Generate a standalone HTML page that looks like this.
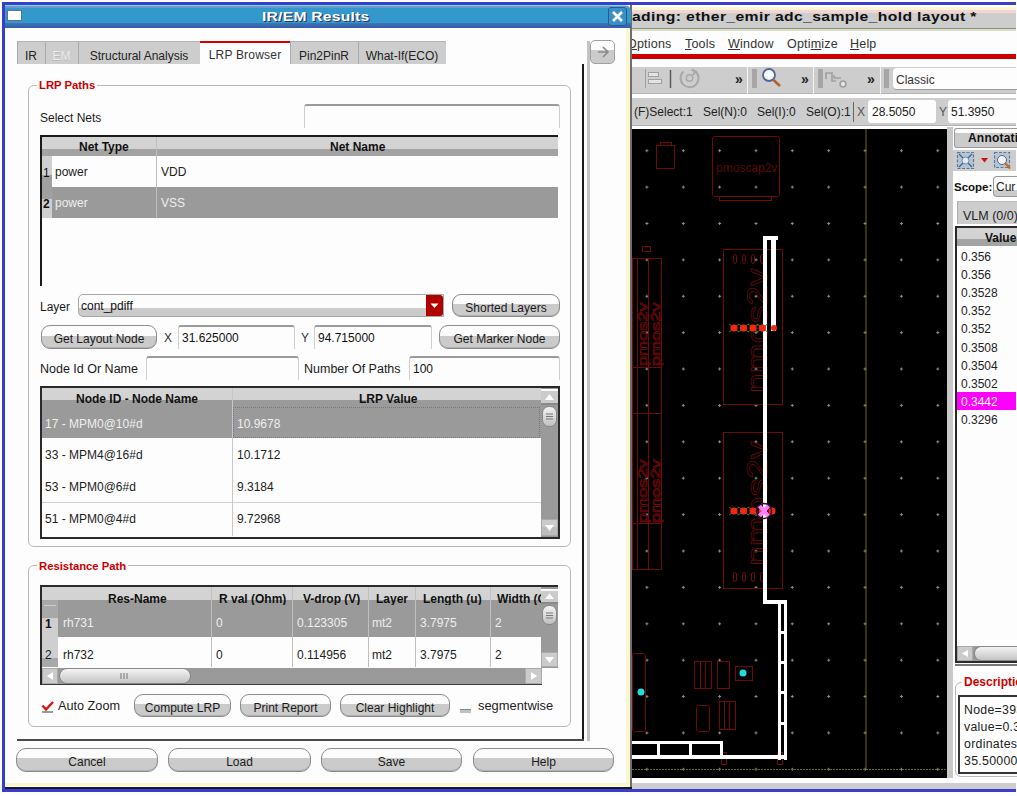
<!DOCTYPE html><html><head><meta charset="utf-8"><title>IR/EM Results</title><style>
*{margin:0;padding:0;box-sizing:border-box}
html,body{width:1017px;height:796px;overflow:hidden;background:#fdfdfd;font-family:"Liberation Sans",sans-serif;font-size:12px;color:#1a1a1a}
.a{position:absolute}
.t{position:absolute;white-space:nowrap;line-height:1}
.b{font-weight:bold}
.btn{position:absolute;padding-top:2px;border:1px solid #8c8c8c;border-radius:9px;background:linear-gradient(#fcfcfc 0,#fcfcfc 45%,#cbcbcb 45%,#cbcbcb 100%);box-shadow:inset 0 -1px 0 #b0b0b0;text-align:center;white-space:nowrap;color:#1a1a1a;font-size:12px}
.inp{position:absolute;background:#fdfdfd;border-top:2px solid #9a9a9a;border-left:1px solid #cfcfcf;border-right:1px solid #cfcfcf;border-radius:3px 3px 0 0}
.grp{position:absolute;border:1px solid #b9b9b9;border-radius:6px}
.gt{position:absolute;background:#fdfdfd;color:#cc0000;font-weight:bold;padding:0 2px;line-height:1;white-space:nowrap}
.hd{position:absolute;background:linear-gradient(#d3d3d3 0,#d3d3d3 62%,#a3a3a3 62%,#a3a3a3 100%)}
.sel{background:#9a9a9a;color:#f4f4f4}
</style></head><body>
<div class="a" style="left:2px;top:2px;width:1014px;height:3px;background:#3a3ccc"></div>
<div class="a" style="left:2px;top:2px;width:3px;height:790px;background:#3a3ccc"></div>
<div class="a" style="left:2px;top:789px;width:1014px;height:3px;background:#3a3ccc"></div>
<div class="a" style="left:632px;top:5px;width:384px;height:2px;background:#fdfdfd"></div>
<div class="a" style="left:632px;top:7px;width:384px;height:3px;background:#fbf6cf"></div>
<div class="a" style="left:632px;top:10px;width:384px;height:3px;background:#f3d6d3"></div>
<div class="a" style="left:632px;top:13px;width:384px;height:15px;background:#cdcdcd"></div>
<div class="a" style="left:632px;top:28px;width:384px;height:1px;background:#8f9a5a"></div>
<div class="a" style="left:632px;top:29px;width:384px;height:2px;background:#d8d8d8"></div>
<div class="t b" style="left:632px;top:9.5px;font-size:13px;letter-spacing:0.3px;transform-origin:0 0;transform:scaleX(1.21);color:#111">ading: ether_emir adc_sample_hold layout *</div>
<div class="a" style="left:632px;top:31px;width:384px;height:23px;background:#fdfdfd"></div>
<div class="t" style="left:627px;top:38px;font-size:12.5px;letter-spacing:0.2px;color:#333"><u>O</u>ptions</div>
<div class="t" style="left:685px;top:38px;font-size:12.5px;letter-spacing:0.2px;color:#333"><u>T</u>ools</div>
<div class="t" style="left:728px;top:38px;font-size:12.5px;letter-spacing:0.2px;color:#333"><u>W</u>indow</div>
<div class="t" style="left:787px;top:38px;font-size:12.5px;letter-spacing:0.2px;color:#333">Opti<u>m</u>ize</div>
<div class="t" style="left:850px;top:38px;font-size:12.5px;letter-spacing:0.2px;color:#333"><u>H</u>elp</div>
<div class="a" style="left:632px;top:54px;width:384px;height:5px;background:#cc0000"></div>
<div class="a" style="left:632px;top:67px;width:384px;height:27px;background:#cdcdcd;border-bottom:1px solid #b4b4b4"></div>
<div class="a" style="left:632px;top:94px;width:384px;height:4px;background:#fdfdfd"></div>
<svg class="a" style="left:632px;top:67px" width="384" height="27"><g stroke="#a0a0a0" fill="#e4e4e4" stroke-width="1"><path d="M13.5 2V21" fill="none"/><rect x="16.5" y="5.5" width="10" height="4"/><rect x="16.5" y="12.5" width="13" height="4"/></g><path d="M38.5 3V21" stroke="#555" stroke-width="1.4"/><g fill="none" stroke="#a8a8a8" stroke-width="2"><path d="M51.5 4.5A9 9 0 1 0 63 4"/><path d="M59.5 2.5L63.5 4.5L61 8"/><circle cx="57.5" cy="11" r="3.2" stroke-width="1.4"/></g><text x="103" y="17" font-family="Liberation Sans" font-size="14" font-weight="bold" fill="#222">»</text><rect x="115" y="0" width="1" height="27" fill="#f4f4f4"/><rect x="120" y="2" width="5" height="19" fill="#a6a6a6"/><circle cx="137" cy="8" r="6" fill="#f4f4f4" stroke="#4a6a9a" stroke-width="1.8"/><path d="M133.5 8H140.5M137 4.5V11.5" stroke="#fff" stroke-width="2.2"/><path d="M141 12.5L148 19" stroke="#b0602a" stroke-width="2.4"/><text x="169" y="17" font-family="Liberation Sans" font-size="14" font-weight="bold" fill="#222">»</text><rect x="181" y="0" width="1" height="27" fill="#f4f4f4"/><rect x="186" y="2" width="5" height="19" fill="#a6a6a6"/><g stroke="#a0a0a0" stroke-width="1.6" fill="none"><path d="M194 12V6H200V14H204M202 8V11H209"/><circle cx="211" cy="17" r="3"/><path d="M209 17H213M211 15V19" stroke="#e8e8e8"/></g><text x="235" y="17" font-family="Liberation Sans" font-size="14" font-weight="bold" fill="#222">»</text><rect x="248" y="0" width="1" height="27" fill="#f4f4f4"/><rect x="252" y="2" width="5" height="19" fill="#a6a6a6"/></svg>
<div class="a" style="left:632px;top:98px;width:384px;height:28px;background:#cdcdcd;border-bottom:1px solid #b0b0b0"></div>
<div class="a" style="left:632px;top:126px;width:384px;height:3px;background:#fdfdfd"></div>
<div class="t" style="left:634px;top:106px;font-size:12px;color:#222">(F)Select:1</div>
<div class="t" style="left:703px;top:106px;font-size:12px;color:#222">Sel(N):0</div>
<div class="t" style="left:757px;top:106px;font-size:12px;color:#222">Sel(I):0</div>
<div class="t" style="left:806px;top:106px;font-size:12px;color:#222">Sel(O):1</div>
<div class="a" style="left:853px;top:102px;width:1px;height:20px;background:#666"></div>
<div class="t" style="left:857px;top:106px;font-size:12px;color:#555">X</div>
<div class="a" style="left:868px;top:100px;width:68px;height:23px;background:#fdfdfd;border-radius:3px"></div>
<div class="t" style="left:872px;top:106px;font-size:12px;color:#222">28.5050</div>
<div class="t" style="left:939px;top:106px;font-size:12px;color:#555">Y</div>
<div class="a" style="left:948px;top:100px;width:70px;height:23px;background:#fdfdfd;border-radius:3px"></div>
<div class="t" style="left:951px;top:106px;font-size:12px;color:#222">51.3950</div>
<div class="a" style="left:893px;top:68px;width:124px;height:22px;background:#fdfdfd;border-radius:4px 0 0 4px;border-bottom:1px solid #999"></div>
<div class="t" style="left:896px;top:74px;font-size:12px;color:#333">Classic</div>
<div class="a" style="left:632px;top:129px;width:315px;height:649px;background:#000"></div>
<div class="a" style="left:632px;top:778px;width:384px;height:5px;background:#fdfdfd"></div>
<div class="a" style="left:632px;top:783px;width:384px;height:6px;background:#cdcdcd"></div>
<svg class="a" style="left:0;top:0" width="1017" height="796"><defs><clipPath id="cc"><rect x="632" y="129" width="315" height="649"/></clipPath></defs><g clip-path="url(#cc)"><path d="M645.4 150.7H648.4M646.9 149.2V152.2" stroke="#8a8a8a" stroke-width="1"/><path d="M645.4 187.1H648.4M646.9 185.6V188.6" stroke="#8a8a8a" stroke-width="1"/><path d="M645.4 223.5H648.4M646.9 222.0V225.0" stroke="#8a8a8a" stroke-width="1"/><path d="M645.4 259.9H648.4M646.9 258.4V261.4" stroke="#8a8a8a" stroke-width="1"/><path d="M645.4 296.3H648.4M646.9 294.8V297.8" stroke="#8a8a8a" stroke-width="1"/><path d="M645.4 332.6H648.4M646.9 331.1V334.1" stroke="#8a8a8a" stroke-width="1"/><path d="M645.4 369.0H648.4M646.9 367.5V370.5" stroke="#8a8a8a" stroke-width="1"/><path d="M645.4 405.4H648.4M646.9 403.9V406.9" stroke="#8a8a8a" stroke-width="1"/><path d="M645.4 441.8H648.4M646.9 440.3V443.3" stroke="#8a8a8a" stroke-width="1"/><path d="M645.4 478.2H648.4M646.9 476.7V479.7" stroke="#8a8a8a" stroke-width="1"/><path d="M645.4 514.6H648.4M646.9 513.1V516.1" stroke="#8a8a8a" stroke-width="1"/><path d="M645.4 551.0H648.4M646.9 549.5V552.5" stroke="#8a8a8a" stroke-width="1"/><path d="M645.4 587.4H648.4M646.9 585.9V588.9" stroke="#8a8a8a" stroke-width="1"/><path d="M645.4 623.8H648.4M646.9 622.3V625.3" stroke="#8a8a8a" stroke-width="1"/><path d="M645.4 660.2H648.4M646.9 658.7V661.7" stroke="#8a8a8a" stroke-width="1"/><path d="M645.4 696.5H648.4M646.9 695.0V698.0" stroke="#8a8a8a" stroke-width="1"/><path d="M645.4 732.9H648.4M646.9 731.4V734.4" stroke="#8a8a8a" stroke-width="1"/><path d="M645.4 769.3H648.4M646.9 767.8V770.8" stroke="#8a8a8a" stroke-width="1"/><path d="M681.8 150.7H684.8M683.3 149.2V152.2" stroke="#8a8a8a" stroke-width="1"/><path d="M681.8 187.1H684.8M683.3 185.6V188.6" stroke="#8a8a8a" stroke-width="1"/><path d="M681.8 223.5H684.8M683.3 222.0V225.0" stroke="#8a8a8a" stroke-width="1"/><path d="M681.8 259.9H684.8M683.3 258.4V261.4" stroke="#8a8a8a" stroke-width="1"/><path d="M681.8 296.3H684.8M683.3 294.8V297.8" stroke="#8a8a8a" stroke-width="1"/><path d="M681.8 332.6H684.8M683.3 331.1V334.1" stroke="#8a8a8a" stroke-width="1"/><path d="M681.8 369.0H684.8M683.3 367.5V370.5" stroke="#8a8a8a" stroke-width="1"/><path d="M681.8 405.4H684.8M683.3 403.9V406.9" stroke="#8a8a8a" stroke-width="1"/><path d="M681.8 441.8H684.8M683.3 440.3V443.3" stroke="#8a8a8a" stroke-width="1"/><path d="M681.8 478.2H684.8M683.3 476.7V479.7" stroke="#8a8a8a" stroke-width="1"/><path d="M681.8 514.6H684.8M683.3 513.1V516.1" stroke="#8a8a8a" stroke-width="1"/><path d="M681.8 551.0H684.8M683.3 549.5V552.5" stroke="#8a8a8a" stroke-width="1"/><path d="M681.8 587.4H684.8M683.3 585.9V588.9" stroke="#8a8a8a" stroke-width="1"/><path d="M681.8 623.8H684.8M683.3 622.3V625.3" stroke="#8a8a8a" stroke-width="1"/><path d="M681.8 660.2H684.8M683.3 658.7V661.7" stroke="#8a8a8a" stroke-width="1"/><path d="M681.8 696.5H684.8M683.3 695.0V698.0" stroke="#8a8a8a" stroke-width="1"/><path d="M681.8 732.9H684.8M683.3 731.4V734.4" stroke="#8a8a8a" stroke-width="1"/><path d="M681.8 769.3H684.8M683.3 767.8V770.8" stroke="#8a8a8a" stroke-width="1"/><path d="M718.1 150.7H721.1M719.6 149.2V152.2" stroke="#8a8a8a" stroke-width="1"/><path d="M718.1 187.1H721.1M719.6 185.6V188.6" stroke="#8a8a8a" stroke-width="1"/><path d="M718.1 223.5H721.1M719.6 222.0V225.0" stroke="#8a8a8a" stroke-width="1"/><path d="M718.1 259.9H721.1M719.6 258.4V261.4" stroke="#8a8a8a" stroke-width="1"/><path d="M718.1 296.3H721.1M719.6 294.8V297.8" stroke="#8a8a8a" stroke-width="1"/><path d="M718.1 332.6H721.1M719.6 331.1V334.1" stroke="#8a8a8a" stroke-width="1"/><path d="M718.1 369.0H721.1M719.6 367.5V370.5" stroke="#8a8a8a" stroke-width="1"/><path d="M718.1 405.4H721.1M719.6 403.9V406.9" stroke="#8a8a8a" stroke-width="1"/><path d="M718.1 441.8H721.1M719.6 440.3V443.3" stroke="#8a8a8a" stroke-width="1"/><path d="M718.1 478.2H721.1M719.6 476.7V479.7" stroke="#8a8a8a" stroke-width="1"/><path d="M718.1 514.6H721.1M719.6 513.1V516.1" stroke="#8a8a8a" stroke-width="1"/><path d="M718.1 551.0H721.1M719.6 549.5V552.5" stroke="#8a8a8a" stroke-width="1"/><path d="M718.1 587.4H721.1M719.6 585.9V588.9" stroke="#8a8a8a" stroke-width="1"/><path d="M718.1 623.8H721.1M719.6 622.3V625.3" stroke="#8a8a8a" stroke-width="1"/><path d="M718.1 660.2H721.1M719.6 658.7V661.7" stroke="#8a8a8a" stroke-width="1"/><path d="M718.1 696.5H721.1M719.6 695.0V698.0" stroke="#8a8a8a" stroke-width="1"/><path d="M718.1 732.9H721.1M719.6 731.4V734.4" stroke="#8a8a8a" stroke-width="1"/><path d="M718.1 769.3H721.1M719.6 767.8V770.8" stroke="#8a8a8a" stroke-width="1"/><path d="M754.5 150.7H757.5M756.0 149.2V152.2" stroke="#8a8a8a" stroke-width="1"/><path d="M754.5 187.1H757.5M756.0 185.6V188.6" stroke="#8a8a8a" stroke-width="1"/><path d="M754.5 223.5H757.5M756.0 222.0V225.0" stroke="#8a8a8a" stroke-width="1"/><path d="M754.5 259.9H757.5M756.0 258.4V261.4" stroke="#8a8a8a" stroke-width="1"/><path d="M754.5 296.3H757.5M756.0 294.8V297.8" stroke="#8a8a8a" stroke-width="1"/><path d="M754.5 332.6H757.5M756.0 331.1V334.1" stroke="#8a8a8a" stroke-width="1"/><path d="M754.5 369.0H757.5M756.0 367.5V370.5" stroke="#8a8a8a" stroke-width="1"/><path d="M754.5 405.4H757.5M756.0 403.9V406.9" stroke="#8a8a8a" stroke-width="1"/><path d="M754.5 441.8H757.5M756.0 440.3V443.3" stroke="#8a8a8a" stroke-width="1"/><path d="M754.5 478.2H757.5M756.0 476.7V479.7" stroke="#8a8a8a" stroke-width="1"/><path d="M754.5 514.6H757.5M756.0 513.1V516.1" stroke="#8a8a8a" stroke-width="1"/><path d="M754.5 551.0H757.5M756.0 549.5V552.5" stroke="#8a8a8a" stroke-width="1"/><path d="M754.5 587.4H757.5M756.0 585.9V588.9" stroke="#8a8a8a" stroke-width="1"/><path d="M754.5 623.8H757.5M756.0 622.3V625.3" stroke="#8a8a8a" stroke-width="1"/><path d="M754.5 660.2H757.5M756.0 658.7V661.7" stroke="#8a8a8a" stroke-width="1"/><path d="M754.5 696.5H757.5M756.0 695.0V698.0" stroke="#8a8a8a" stroke-width="1"/><path d="M754.5 732.9H757.5M756.0 731.4V734.4" stroke="#8a8a8a" stroke-width="1"/><path d="M754.5 769.3H757.5M756.0 767.8V770.8" stroke="#8a8a8a" stroke-width="1"/><path d="M790.8 150.7H793.8M792.3 149.2V152.2" stroke="#8a8a8a" stroke-width="1"/><path d="M790.8 187.1H793.8M792.3 185.6V188.6" stroke="#8a8a8a" stroke-width="1"/><path d="M790.8 223.5H793.8M792.3 222.0V225.0" stroke="#8a8a8a" stroke-width="1"/><path d="M790.8 259.9H793.8M792.3 258.4V261.4" stroke="#8a8a8a" stroke-width="1"/><path d="M790.8 296.3H793.8M792.3 294.8V297.8" stroke="#8a8a8a" stroke-width="1"/><path d="M790.8 332.6H793.8M792.3 331.1V334.1" stroke="#8a8a8a" stroke-width="1"/><path d="M790.8 369.0H793.8M792.3 367.5V370.5" stroke="#8a8a8a" stroke-width="1"/><path d="M790.8 405.4H793.8M792.3 403.9V406.9" stroke="#8a8a8a" stroke-width="1"/><path d="M790.8 441.8H793.8M792.3 440.3V443.3" stroke="#8a8a8a" stroke-width="1"/><path d="M790.8 478.2H793.8M792.3 476.7V479.7" stroke="#8a8a8a" stroke-width="1"/><path d="M790.8 514.6H793.8M792.3 513.1V516.1" stroke="#8a8a8a" stroke-width="1"/><path d="M790.8 551.0H793.8M792.3 549.5V552.5" stroke="#8a8a8a" stroke-width="1"/><path d="M790.8 587.4H793.8M792.3 585.9V588.9" stroke="#8a8a8a" stroke-width="1"/><path d="M790.8 623.8H793.8M792.3 622.3V625.3" stroke="#8a8a8a" stroke-width="1"/><path d="M790.8 660.2H793.8M792.3 658.7V661.7" stroke="#8a8a8a" stroke-width="1"/><path d="M790.8 696.5H793.8M792.3 695.0V698.0" stroke="#8a8a8a" stroke-width="1"/><path d="M790.8 732.9H793.8M792.3 731.4V734.4" stroke="#8a8a8a" stroke-width="1"/><path d="M790.8 769.3H793.8M792.3 767.8V770.8" stroke="#8a8a8a" stroke-width="1"/><path d="M827.2 150.7H830.2M828.7 149.2V152.2" stroke="#8a8a8a" stroke-width="1"/><path d="M827.2 187.1H830.2M828.7 185.6V188.6" stroke="#8a8a8a" stroke-width="1"/><path d="M827.2 223.5H830.2M828.7 222.0V225.0" stroke="#8a8a8a" stroke-width="1"/><path d="M827.2 259.9H830.2M828.7 258.4V261.4" stroke="#8a8a8a" stroke-width="1"/><path d="M827.2 296.3H830.2M828.7 294.8V297.8" stroke="#8a8a8a" stroke-width="1"/><path d="M827.2 332.6H830.2M828.7 331.1V334.1" stroke="#8a8a8a" stroke-width="1"/><path d="M827.2 369.0H830.2M828.7 367.5V370.5" stroke="#8a8a8a" stroke-width="1"/><path d="M827.2 405.4H830.2M828.7 403.9V406.9" stroke="#8a8a8a" stroke-width="1"/><path d="M827.2 441.8H830.2M828.7 440.3V443.3" stroke="#8a8a8a" stroke-width="1"/><path d="M827.2 478.2H830.2M828.7 476.7V479.7" stroke="#8a8a8a" stroke-width="1"/><path d="M827.2 514.6H830.2M828.7 513.1V516.1" stroke="#8a8a8a" stroke-width="1"/><path d="M827.2 551.0H830.2M828.7 549.5V552.5" stroke="#8a8a8a" stroke-width="1"/><path d="M827.2 587.4H830.2M828.7 585.9V588.9" stroke="#8a8a8a" stroke-width="1"/><path d="M827.2 623.8H830.2M828.7 622.3V625.3" stroke="#8a8a8a" stroke-width="1"/><path d="M827.2 660.2H830.2M828.7 658.7V661.7" stroke="#8a8a8a" stroke-width="1"/><path d="M827.2 696.5H830.2M828.7 695.0V698.0" stroke="#8a8a8a" stroke-width="1"/><path d="M827.2 732.9H830.2M828.7 731.4V734.4" stroke="#8a8a8a" stroke-width="1"/><path d="M827.2 769.3H830.2M828.7 767.8V770.8" stroke="#8a8a8a" stroke-width="1"/><path d="M863.6 150.7H866.6M865.1 149.2V152.2" stroke="#8a8a8a" stroke-width="1"/><path d="M863.6 187.1H866.6M865.1 185.6V188.6" stroke="#8a8a8a" stroke-width="1"/><path d="M863.6 223.5H866.6M865.1 222.0V225.0" stroke="#8a8a8a" stroke-width="1"/><path d="M863.6 259.9H866.6M865.1 258.4V261.4" stroke="#8a8a8a" stroke-width="1"/><path d="M863.6 296.3H866.6M865.1 294.8V297.8" stroke="#8a8a8a" stroke-width="1"/><path d="M863.6 332.6H866.6M865.1 331.1V334.1" stroke="#8a8a8a" stroke-width="1"/><path d="M863.6 369.0H866.6M865.1 367.5V370.5" stroke="#8a8a8a" stroke-width="1"/><path d="M863.6 405.4H866.6M865.1 403.9V406.9" stroke="#8a8a8a" stroke-width="1"/><path d="M863.6 441.8H866.6M865.1 440.3V443.3" stroke="#8a8a8a" stroke-width="1"/><path d="M863.6 478.2H866.6M865.1 476.7V479.7" stroke="#8a8a8a" stroke-width="1"/><path d="M863.6 514.6H866.6M865.1 513.1V516.1" stroke="#8a8a8a" stroke-width="1"/><path d="M863.6 551.0H866.6M865.1 549.5V552.5" stroke="#8a8a8a" stroke-width="1"/><path d="M863.6 587.4H866.6M865.1 585.9V588.9" stroke="#8a8a8a" stroke-width="1"/><path d="M863.6 623.8H866.6M865.1 622.3V625.3" stroke="#8a8a8a" stroke-width="1"/><path d="M863.6 660.2H866.6M865.1 658.7V661.7" stroke="#8a8a8a" stroke-width="1"/><path d="M863.6 696.5H866.6M865.1 695.0V698.0" stroke="#8a8a8a" stroke-width="1"/><path d="M863.6 732.9H866.6M865.1 731.4V734.4" stroke="#8a8a8a" stroke-width="1"/><path d="M863.6 769.3H866.6M865.1 767.8V770.8" stroke="#8a8a8a" stroke-width="1"/><path d="M899.9 150.7H902.9M901.4 149.2V152.2" stroke="#8a8a8a" stroke-width="1"/><path d="M899.9 187.1H902.9M901.4 185.6V188.6" stroke="#8a8a8a" stroke-width="1"/><path d="M899.9 223.5H902.9M901.4 222.0V225.0" stroke="#8a8a8a" stroke-width="1"/><path d="M899.9 259.9H902.9M901.4 258.4V261.4" stroke="#8a8a8a" stroke-width="1"/><path d="M899.9 296.3H902.9M901.4 294.8V297.8" stroke="#8a8a8a" stroke-width="1"/><path d="M899.9 332.6H902.9M901.4 331.1V334.1" stroke="#8a8a8a" stroke-width="1"/><path d="M899.9 369.0H902.9M901.4 367.5V370.5" stroke="#8a8a8a" stroke-width="1"/><path d="M899.9 405.4H902.9M901.4 403.9V406.9" stroke="#8a8a8a" stroke-width="1"/><path d="M899.9 441.8H902.9M901.4 440.3V443.3" stroke="#8a8a8a" stroke-width="1"/><path d="M899.9 478.2H902.9M901.4 476.7V479.7" stroke="#8a8a8a" stroke-width="1"/><path d="M899.9 514.6H902.9M901.4 513.1V516.1" stroke="#8a8a8a" stroke-width="1"/><path d="M899.9 551.0H902.9M901.4 549.5V552.5" stroke="#8a8a8a" stroke-width="1"/><path d="M899.9 587.4H902.9M901.4 585.9V588.9" stroke="#8a8a8a" stroke-width="1"/><path d="M899.9 623.8H902.9M901.4 622.3V625.3" stroke="#8a8a8a" stroke-width="1"/><path d="M899.9 660.2H902.9M901.4 658.7V661.7" stroke="#8a8a8a" stroke-width="1"/><path d="M899.9 696.5H902.9M901.4 695.0V698.0" stroke="#8a8a8a" stroke-width="1"/><path d="M899.9 732.9H902.9M901.4 731.4V734.4" stroke="#8a8a8a" stroke-width="1"/><path d="M899.9 769.3H902.9M901.4 767.8V770.8" stroke="#8a8a8a" stroke-width="1"/><path d="M936.3 150.7H939.3M937.8 149.2V152.2" stroke="#8a8a8a" stroke-width="1"/><path d="M936.3 187.1H939.3M937.8 185.6V188.6" stroke="#8a8a8a" stroke-width="1"/><path d="M936.3 223.5H939.3M937.8 222.0V225.0" stroke="#8a8a8a" stroke-width="1"/><path d="M936.3 259.9H939.3M937.8 258.4V261.4" stroke="#8a8a8a" stroke-width="1"/><path d="M936.3 296.3H939.3M937.8 294.8V297.8" stroke="#8a8a8a" stroke-width="1"/><path d="M936.3 332.6H939.3M937.8 331.1V334.1" stroke="#8a8a8a" stroke-width="1"/><path d="M936.3 369.0H939.3M937.8 367.5V370.5" stroke="#8a8a8a" stroke-width="1"/><path d="M936.3 405.4H939.3M937.8 403.9V406.9" stroke="#8a8a8a" stroke-width="1"/><path d="M936.3 441.8H939.3M937.8 440.3V443.3" stroke="#8a8a8a" stroke-width="1"/><path d="M936.3 478.2H939.3M937.8 476.7V479.7" stroke="#8a8a8a" stroke-width="1"/><path d="M936.3 514.6H939.3M937.8 513.1V516.1" stroke="#8a8a8a" stroke-width="1"/><path d="M936.3 551.0H939.3M937.8 549.5V552.5" stroke="#8a8a8a" stroke-width="1"/><path d="M936.3 587.4H939.3M937.8 585.9V588.9" stroke="#8a8a8a" stroke-width="1"/><path d="M936.3 623.8H939.3M937.8 622.3V625.3" stroke="#8a8a8a" stroke-width="1"/><path d="M936.3 660.2H939.3M937.8 658.7V661.7" stroke="#8a8a8a" stroke-width="1"/><path d="M936.3 696.5H939.3M937.8 695.0V698.0" stroke="#8a8a8a" stroke-width="1"/><path d="M936.3 732.9H939.3M937.8 731.4V734.4" stroke="#8a8a8a" stroke-width="1"/><path d="M936.3 769.3H939.3M937.8 767.8V770.8" stroke="#8a8a8a" stroke-width="1"/><path d="M866 129V769" stroke="#6a6a10" stroke-width="1"/><path d="M632 769.5H947" stroke="#6a6a10" stroke-width="1" stroke-dasharray="2 1"/><g fill="none" stroke="#6e0a0a" stroke-width="1"><rect x="656.5" y="145.5" width="18" height="23"/><rect x="660.5" y="142.5" width="11" height="3"/><rect x="712.5" y="136.5" width="67" height="60" rx="2"/><rect x="719.5" y="196.5" width="52" height="4"/><rect x="632.5" y="258.5" width="29" height="311"/><path d="M648.5 259V570M637.5 259V570M632 367.5H662M632 413.5H662M632 523.5H662"/><rect x="642.5" y="246.5" width="8" height="5"/><rect x="723.5" y="249.5" width="59" height="155"/><rect x="723.5" y="432.5" width="59" height="156"/><rect x="694.5" y="661.5" width="17" height="27"/><path d="M700.5 662V688M705.5 662V688"/><rect x="717.5" y="661.5" width="12" height="27"/><rect x="735.5" y="666.5" width="17" height="14"/><rect x="696.5" y="705.5" width="13" height="26" rx="2"/><rect x="719.5" y="701.5" width="16" height="28"/><path d="M724.5 702V729M729.5 702V729"/><rect x="632.5" y="653.5" width="13" height="78" rx="2"/><rect x="721.5" y="752.5" width="5" height="12"/><rect x="777.5" y="752.5" width="5" height="12"/></g><text x="716" y="172" font-family="Liberation Sans" font-size="12" fill="#5a0808">pmoscap2v</text><text transform="translate(767,393) rotate(-90) scale(1.05,0.85)" font-family="Liberation Sans" font-size="34" fill="none" stroke="#6e0a0a" stroke-width="0.8">nmos2v</text><text transform="translate(767,566) rotate(-90) scale(1.05,0.85)" font-family="Liberation Sans" font-size="34" fill="none" stroke="#6e0a0a" stroke-width="0.8">nmos2v</text><text transform="translate(647,366) rotate(-90) scale(1.3,0.85)" font-family="Liberation Sans" font-size="14" fill="none" stroke="#6e0a0a" stroke-width="0.8">pmos2v</text><text transform="translate(660,366) rotate(-90) scale(1.3,0.85)" font-family="Liberation Sans" font-size="14" fill="none" stroke="#6e0a0a" stroke-width="0.8">pmos2v</text><text transform="translate(647,523) rotate(-90) scale(1.3,0.85)" font-family="Liberation Sans" font-size="14" fill="none" stroke="#6e0a0a" stroke-width="0.8">pmos2v</text><text transform="translate(660,523) rotate(-90) scale(1.3,0.85)" font-family="Liberation Sans" font-size="14" fill="none" stroke="#6e0a0a" stroke-width="0.8">pmos2v</text><rect x="733.5" y="254.5" width="3" height="9" rx="1.5" fill="none" stroke="#6e0a0a"/><rect x="733.5" y="572.5" width="3" height="9" rx="1.5" fill="none" stroke="#6e0a0a"/><rect x="742.5" y="254.5" width="3" height="9" rx="1.5" fill="none" stroke="#6e0a0a"/><rect x="742.5" y="572.5" width="3" height="9" rx="1.5" fill="none" stroke="#6e0a0a"/><rect x="751.5" y="254.5" width="3" height="9" rx="1.5" fill="none" stroke="#6e0a0a"/><rect x="751.5" y="572.5" width="3" height="9" rx="1.5" fill="none" stroke="#6e0a0a"/><rect x="760.5" y="254.5" width="3" height="9" rx="1.5" fill="none" stroke="#6e0a0a"/><rect x="760.5" y="572.5" width="3" height="9" rx="1.5" fill="none" stroke="#6e0a0a"/><g fill="#ffffff"><rect x="763" y="236" width="15" height="4"/><rect x="771" y="236" width="5" height="95"/><rect x="763" y="236" width="4" height="367"/><rect x="763" y="600" width="24" height="4"/><rect x="778" y="600" width="3" height="160"/><rect x="784" y="600" width="3" height="160"/><rect x="778" y="631" width="9" height="3"/><rect x="778" y="661" width="9" height="3"/><rect x="778" y="691" width="9" height="3"/><rect x="778" y="722" width="9" height="3"/><rect x="632" y="755" width="155" height="4"/><rect x="632" y="741" width="91" height="3"/><rect x="657" y="741" width="3" height="18"/><rect x="689" y="741" width="3" height="18"/><rect x="720" y="741" width="3" height="18"/></g><path d="M729 324L739 332M729 332L739 324" stroke="#6a6a10" stroke-width="1"/><circle cx="734" cy="328" r="3.6" fill="#ee2a10"/><path d="M738.5 324L748.5 332M738.5 332L748.5 324" stroke="#6a6a10" stroke-width="1"/><circle cx="743.5" cy="328" r="3.6" fill="#ee2a10"/><path d="M748 324L758 332M748 332L758 324" stroke="#6a6a10" stroke-width="1"/><circle cx="753" cy="328" r="3.6" fill="#ee2a10"/><path d="M757.5 324L767.5 332M757.5 332L767.5 324" stroke="#6a6a10" stroke-width="1"/><circle cx="762.5" cy="328" r="3.6" fill="#ee2a10"/><path d="M729 507L739 515M729 515L739 507" stroke="#6a6a10" stroke-width="1"/><circle cx="734" cy="511" r="3.6" fill="#ee2a10"/><path d="M738.5 507L748.5 515M738.5 515L748.5 507" stroke="#6a6a10" stroke-width="1"/><circle cx="743.5" cy="511" r="3.6" fill="#ee2a10"/><path d="M748 507L758 515M748 515L758 507" stroke="#6a6a10" stroke-width="1"/><circle cx="753" cy="511" r="3.6" fill="#ee2a10"/><path d="M757.5 507L767.5 515M757.5 515L767.5 507" stroke="#6a6a10" stroke-width="1"/><circle cx="762.5" cy="511" r="3.6" fill="#ee2a10"/><circle cx="774" cy="328" r="3" fill="#ee2a10"/><circle cx="772" cy="511" r="3.6" fill="#ee2a10"/><circle cx="764" cy="511" r="7.5" fill="none" stroke="#3a103a" stroke-width="1.5"/><path d="M759.5 506L768.5 516M759.5 516L768.5 506" stroke="#ff80ff" stroke-width="4"/><circle cx="743" cy="673" r="3.5" fill="#22dddd"/><circle cx="641" cy="692" r="3.5" fill="#22dddd"/></g></svg>
<div class="a" style="left:947px;top:127px;width:6px;height:651px;background:#c8c8c8"></div>
<div class="a" style="left:953px;top:127px;width:63px;height:651px;background:#fdfdfd"></div>
<div class="a" style="left:954px;top:128px;width:63px;height:20px;background:linear-gradient(#fcfcfc 0,#fcfcfc 25%,#cbcbcb 25%);border:1px solid #9a9a9a;border-right:none;border-radius:3px 0 0 3px"></div>
<div class="t b" style="left:968px;top:132px;font-size:12px;color:#111;letter-spacing:0.2px">Annotation</div>
<div class="a" style="left:953px;top:150px;width:63px;height:21px;background:#cdcdcd"></div>
<svg class="a" style="left:953px;top:150px" width="64" height="21"><rect x="4.5" y="2.5" width="16" height="16" fill="#b8c4d0" stroke="#5a7aa0" stroke-width="1.2" stroke-dasharray="3 1.5"/><path d="M6 4L10 8M19 4L15 8M6 17L10 13M19 17L15 13" stroke="#3a6a9a" stroke-width="1.4"/><circle cx="12.5" cy="10.5" r="3.5" fill="#e0ecf4" stroke="#6a8aaa"/><path d="M28 8H35L31.5 12.5Z" fill="#d01010"/><rect x="41.5" y="2.5" width="15" height="15" fill="#b8c4d0" stroke="#5a7aa0" stroke-width="1.2" stroke-dasharray="3 1.5"/><circle cx="49" cy="10" r="4.5" fill="#eef4fa" stroke="#4a6a8a"/><path d="M52 13L57 18.5" stroke="#c66a20" stroke-width="2"/></svg>
<div class="t b" style="left:954px;top:182px;font-size:11.5px;color:#111">Scope:</div>
<div class="a" style="left:993px;top:176px;width:24px;height:21px;background:linear-gradient(#fcfcfc 0,#fcfcfc 70%,#cbcbcb 70%);border:1px solid #999;border-right:none;border-radius:4px 0 0 4px"></div>
<div class="t" style="left:996px;top:181px;font-size:12px;color:#222">Cur</div>
<div class="a" style="left:957px;top:201px;width:60px;height:23px;background:#cdcdcd;border-left:1px solid #aaa;border-top:1px solid #bbb"></div>
<div class="t" style="left:963px;top:210px;font-size:12.5px;color:#222">VLM (0/0)</div>
<div class="a" style="left:955px;top:226px;width:62px;height:437px;border:2px solid #2a2a2a;border-right:none;background:#fdfdfd"></div>
<div class="hd" style="left:957px;top:228px;width:60px;height:18px"></div>
<div class="t b" style="left:985px;top:232px;font-size:12px;color:#111">Value</div>
<div class="t" style="left:961px;top:251px;font-size:12px;color:#222">0.356</div>
<div class="t" style="left:961px;top:269px;font-size:12px;color:#222">0.356</div>
<div class="t" style="left:961px;top:287px;font-size:12px;color:#222">0.3528</div>
<div class="t" style="left:961px;top:305px;font-size:12px;color:#222">0.352</div>
<div class="t" style="left:961px;top:323px;font-size:12px;color:#222">0.352</div>
<div class="t" style="left:961px;top:342px;font-size:12px;color:#222">0.3508</div>
<div class="t" style="left:961px;top:360px;font-size:12px;color:#222">0.3504</div>
<div class="t" style="left:961px;top:378px;font-size:12px;color:#222">0.3502</div>
<div class="a" style="left:957px;top:392px;width:59px;height:18px;background:#ff00ff"></div>
<div class="t" style="left:961px;top:396px;font-size:12px;color:#fff">0.3442</div>
<div class="t" style="left:961px;top:414px;font-size:12px;color:#222">0.3296</div>
<div class="a" style="left:957px;top:646px;width:60px;height:15px;background:#9a9a9a"></div>
<div class="a" style="left:957px;top:646px;width:16px;height:15px;background:#cbcbcb;border:1px solid #aaa"></div>
<svg class="a" style="left:957px;top:646px" width="16" height="15"><path d="M11 4V11L5 7.5Z" fill="#fff"/></svg>
<div class="a" style="left:974px;top:646px;width:43px;height:15px;border:1px solid #888;border-right:none;border-radius:7px 0 0 7px;background:linear-gradient(#f4f4f4,#c4c4c4)"></div>
<div class="a" style="left:955px;top:664px;width:62px;height:2px;background:#777"></div>
<div class="grp" style="left:955px;top:682px;width:70px;height:95px"></div>
<div class="gt" style="left:962px;top:676px;font-size:12px">Description</div>
<div class="a" style="left:958px;top:695px;width:59px;height:79px;border:2px solid #333;border-right:none;background:#fdfdfd"></div>
<div class="t" style="left:964px;top:704px;font-size:12.3px;letter-spacing:0.3px;color:#222">Node=393</div>
<div class="t" style="left:964px;top:721px;font-size:12.3px;letter-spacing:0.3px;color:#222">value=0.3442</div>
<div class="t" style="left:964px;top:738px;font-size:12.3px;letter-spacing:0.3px;color:#222">ordinates</div>
<div class="t" style="left:964px;top:755px;font-size:12.3px;letter-spacing:0.3px;color:#222">35.500000</div>
<div class="a" style="left:5px;top:5px;width:626px;height:782px;background:#fdfdfd"></div>
<div class="a" style="left:626px;top:28px;width:4px;height:759px;background:#fbf6cf"></div>
<div class="a" style="left:5px;top:783px;width:625px;height:3px;background:#fbf6cf"></div>
<div class="a" style="left:5px;top:787px;width:627px;height:2px;background:#1a1a1a"></div>
<div class="a" style="left:630px;top:5px;width:2px;height:782px;background:#6e6e6e"></div>
<div class="a" style="left:5px;top:5px;width:626px;height:23px;border-radius:0 6px 0 0;background:linear-gradient(#6ee0f0 0,#6ee0f0 1px,#6a98c0 1px,#6a98c0 3px,#3399cc 3px,#3399cc 18px,#3a78b8 18px,#3a5aa8 23px)"></div>
<div class="a" style="left:7px;top:10px;width:15px;height:11px;background:#fdfdfd;border:1px solid #6a6a8a"></div>
<div class="t b" style="left:262px;top:11px;font-size:12.5px;letter-spacing:0.2px;transform-origin:0 0;transform:scaleX(1.25);color:#fff;text-shadow:1px 1px 0 #2a3a5a">IR/EM Results</div>
<div class="a" style="left:608px;top:7px;width:19px;height:19px;border:1px solid #2a5a8a;border-radius:3px;background:#3a8fc8"></div>
<svg class="a" style="left:608px;top:7px" width="19" height="19"><path d="M5 5L14 14M14 5L5 14" stroke="#fff" stroke-width="2.6"/></svg>
<div class="a" style="left:17px;top:41px;width:28px;height:23px;background:#cdcdcd;border-left:1px solid #a9a9a9;border-top:1px solid #b4b4b4"></div>
<div class="t" style="left:17px;top:50px;width:28px;text-align:center;font-size:12px;color:#222">IR</div>
<div class="a" style="left:45px;top:41px;width:33px;height:23px;background:#cdcdcd;border-left:1px solid #a9a9a9;border-top:1px solid #b4b4b4"></div>
<div class="t" style="left:45px;top:50px;width:33px;text-align:center;font-size:12px;color:#ececec;text-shadow:0 1px 0 #b8b8b8">EM</div>
<div class="a" style="left:78px;top:41px;width:122px;height:23px;background:#cdcdcd;border-left:1px solid #a9a9a9;border-top:1px solid #b4b4b4"></div>
<div class="t" style="left:78px;top:50px;width:122px;text-align:center;font-size:12px;color:#222">Structural Analysis</div>
<div class="a" style="left:290px;top:41px;width:68px;height:23px;background:#cdcdcd;border-left:1px solid #a9a9a9;border-top:1px solid #b4b4b4"></div>
<div class="t" style="left:290px;top:50px;width:68px;text-align:center;font-size:12px;color:#222">Pin2PinR</div>
<div class="a" style="left:358px;top:41px;width:88px;height:23px;background:#cdcdcd;border-left:1px solid #a9a9a9;border-top:1px solid #b4b4b4"></div>
<div class="t" style="left:358px;top:50px;width:88px;text-align:center;font-size:12px;color:#222">What-If(ECO)</div>
<div class="a" style="left:200px;top:41px;width:90px;height:23px;background:#fdfdfd;border-top:2px solid #d40000"></div>
<div class="t" style="left:200px;top:49px;width:90px;text-align:center;font-size:12px;color:#333;letter-spacing:0.2px">LRP Browser</div>
<div class="a" style="left:587px;top:41px;width:3px;height:700px;background:#c4c4c4"></div>
<div class="a" style="left:582px;top:64px;width:2px;height:677px;background:#1a1a1a"></div>
<div class="a" style="left:17px;top:739px;width:567px;height:2px;background:#4a4a4a"></div>
<div class="a" style="left:590px;top:40px;width:25px;height:24px;border:1px solid #a0a0a0;border-radius:5px;background:linear-gradient(#fcfcfc 0,#fcfcfc 40%,#cbcbcb 40%)"></div>
<svg class="a" style="left:590px;top:40px" width="25" height="24"><path d="M8 12H17M13 7L18 12L13 17" stroke="#8a8a8a" stroke-width="1.6" fill="none"/></svg>
<div class="grp" style="left:28px;top:85px;width:543px;height:462px"></div>
<div class="gt" style="left:37px;top:80px;font-size:11.3px">LRP Paths</div>
<div class="t" style="left:40px;top:112px;font-size:12px">Select Nets</div>
<div class="inp" style="left:304px;top:104px;width:256px;height:24px"></div>
<div class="a" style="left:40px;top:135px;width:518px;height:2px;background:#1a1a1a"></div>
<div class="a" style="left:40px;top:135px;width:2px;height:151px;background:#1a1a1a"></div>
<div class="hd" style="left:42px;top:137px;width:516px;height:19px"></div>
<div class="a" style="left:156px;top:137px;width:1px;height:81px;background:#bdbdbd"></div>
<div class="t b" style="left:79px;top:141px;font-size:12px;color:#111">Net Type</div>
<div class="t b" style="left:330px;top:141px;font-size:12px;color:#111">Net Name</div>
<div class="a" style="left:42px;top:156px;width:516px;height:31px;background:#fdfdfd"></div>
<div class="a" style="left:42px;top:187px;width:516px;height:31px;background:#9a9a9a"></div>
<div class="a" style="left:42px;top:156px;width:10px;height:31px;background:linear-gradient(#cfcfcf 0,#cfcfcf 60%,#a0a0a0 60%)"></div>
<div class="a" style="left:42px;top:187px;width:10px;height:31px;background:linear-gradient(#a0a0a0 0,#a0a0a0 40%,#cfcfcf 40%)"></div>
<div class="a" style="left:156px;top:156px;width:1px;height:62px;background:#bdbdbd"></div>
<div class="t" style="left:43px;top:167px;font-size:12px;color:#111">1</div>
<div class="t" style="left:55px;top:166px;font-size:12px;color:#222">power</div>
<div class="t" style="left:161px;top:166px;font-size:12px;color:#222">VDD</div>
<div class="t b" style="left:43px;top:198px;font-size:12px;color:#111">2</div>
<div class="t" style="left:55px;top:197px;font-size:12px;color:#eee">power</div>
<div class="t" style="left:161px;top:197px;font-size:12px;color:#eee">VSS</div>
<div class="t" style="left:40px;top:301px;font-size:12px">Layer</div>
<div class="a" style="left:78px;top:294px;width:366px;height:23px;border:1px solid #a8a8a8;border-radius:5px 0 0 5px;background:linear-gradient(#fcfcfc 0,#fcfcfc 62%,#cbcbcb 62%)"></div>
<div class="t" style="left:81px;top:300px;font-size:12px;color:#111">cont_pdiff</div>
<div class="a" style="left:426px;top:295px;width:17px;height:21px;background:#b00000;border-radius:0 3px 3px 0"></div>
<svg class="a" style="left:426px;top:295px" width="17" height="21"><path d="M4.5 8.5H12.5L8.5 13Z" fill="#fff"/></svg>
<div class="btn" style="left:452px;top:294px;width:108px;height:23px;line-height:22px">Shorted Layers</div>
<div class="btn" style="left:41px;top:325px;width:116px;height:24px;line-height:23px">Get Layout Node</div>
<div class="t" style="left:164px;top:332px;font-size:12px;color:#333">X</div>
<div class="inp" style="left:178px;top:325px;width:117px;height:24px"></div>
<div class="t" style="left:182px;top:332px;font-size:12px;color:#111">31.625000</div>
<div class="t" style="left:301px;top:332px;font-size:12px;color:#333">Y</div>
<div class="inp" style="left:314px;top:325px;width:118px;height:24px"></div>
<div class="t" style="left:318px;top:332px;font-size:12px;color:#111">94.715000</div>
<div class="btn" style="left:439px;top:325px;width:121px;height:24px;line-height:23px">Get Marker Node</div>
<div class="t" style="left:40px;top:363px;font-size:12.5px">Node Id Or Name</div>
<div class="inp" style="left:146px;top:356px;width:153px;height:24px"></div>
<div class="t" style="left:304px;top:363px;font-size:12.5px">Number Of Paths</div>
<div class="inp" style="left:409px;top:356px;width:151px;height:24px"></div>
<div class="t" style="left:413px;top:363px;font-size:12px;color:#111">100</div>
<div class="a" style="left:40px;top:386px;width:520px;height:153px;border:2px solid #2a2a2a;border-right-width:2px;background:#fdfdfd"></div>
<div class="a" style="left:42px;top:388px;width:499px;height:12px;background:#d3d3d3"></div>
<div class="a" style="left:42px;top:400px;width:499px;height:38px;background:#9a9a9a"></div>
<div class="a" style="left:42px;top:502px;width:499px;height:1px;background:#d0d0d0"></div>
<div class="a" style="left:232px;top:388px;width:1px;height:148px;background:#c8c8c8"></div>
<div class="a" style="left:233px;top:407px;width:307px;height:31px;border:1px dotted #777"></div>
<div class="t b" style="left:76px;top:393px;font-size:12px;color:#111">Node ID - Node Name</div>
<div class="t b" style="left:359px;top:393px;font-size:12px;color:#111">LRP Value</div>
<div class="t" style="left:45px;top:418px;font-size:12px;color:#eee">17 - MPM0@10#d</div>
<div class="t" style="left:237px;top:418px;font-size:12px;color:#eee">10.9678</div>
<div class="t" style="left:45px;top:449px;font-size:12px;color:#222">33 - MPM4@16#d</div>
<div class="t" style="left:237px;top:449px;font-size:12px;color:#222">10.1712</div>
<div class="t" style="left:45px;top:481px;font-size:12px;color:#222">53 - MPM0@6#d</div>
<div class="t" style="left:237px;top:481px;font-size:12px;color:#222">9.3184</div>
<div class="t" style="left:45px;top:513px;font-size:12px;color:#222">51 - MPM0@4#d</div>
<div class="t" style="left:237px;top:513px;font-size:12px;color:#222">9.72968</div>
<div class="a" style="left:541px;top:388px;width:17px;height:149px;background:#9a9a9a"></div>
<div class="a" style="left:541px;top:389px;width:17px;height:16px;background:#cbcbcb;border-top:2px solid #fcfcfc;border-bottom:2px solid #8a8a8a"></div>
<svg class="a" style="left:541px;top:389px" width="17" height="16"><path d="M4 11H13L8.5 5Z" fill="#fff"/></svg>
<div class="a" style="left:542px;top:406px;width:15px;height:21px;border:1px solid #888;border-radius:7px;background:linear-gradient(#f4f4f4,#c0c0c0)"></div>
<svg class="a" style="left:542px;top:406px" width="15" height="21"><path d="M4 8H11M4 10.5H11M4 13H11" stroke="#777" stroke-width="1"/></svg>
<div class="a" style="left:541px;top:519px;width:17px;height:17px;background:linear-gradient(#cbcbcb 0,#cbcbcb 50%,#bdbdbd 50%);border:1px solid #aaa"></div>
<svg class="a" style="left:541px;top:519px" width="17" height="17"><path d="M4 6H13L8.5 12Z" fill="#fff"/></svg>
<div class="grp" style="left:28px;top:565px;width:543px;height:162px"></div>
<div class="gt" style="left:37px;top:561px;font-size:11.3px">Resistance Path</div>
<div class="a" style="left:40px;top:585px;width:518px;height:100px;border:2px solid #2a2a2a;border-right:none;border-bottom:none;background:#fdfdfd"></div>
<div class="a" style="left:42px;top:587px;width:500px;height:13px;background:#d3d3d3"></div>
<div class="a" style="left:42px;top:600px;width:500px;height:37px;background:#9a9a9a"></div>
<div class="a" style="left:42px;top:600px;width:16px;height:18px;background:#a8a8a8"></div>
<div class="a" style="left:42px;top:618px;width:16px;height:19px;background:#cfcfcf"></div>
<div class="a" style="left:42px;top:637px;width:16px;height:21px;background:#cfcfcf"></div>
<div class="a" style="left:42px;top:658px;width:16px;height:9px;background:#a8a8a8"></div>
<div class="a" style="left:44px;top:605px;width:12px;height:1px;background:#ccc"></div>
<div class="a" style="left:211px;top:587px;width:1px;height:80px;background:#c0c0c0"></div>
<div class="a" style="left:292px;top:587px;width:1px;height:80px;background:#c0c0c0"></div>
<div class="a" style="left:368px;top:587px;width:1px;height:80px;background:#c0c0c0"></div>
<div class="a" style="left:415px;top:587px;width:1px;height:80px;background:#c0c0c0"></div>
<div class="a" style="left:490px;top:587px;width:1px;height:80px;background:#c0c0c0"></div>
<div class="t b" style="left:108px;top:593px;font-size:12px;color:#111;overflow:hidden;max-width:433px">Res-Name</div>
<div class="t b" style="left:219px;top:593px;font-size:12px;color:#111;overflow:hidden;max-width:322px">R val (Ohm)</div>
<div class="t b" style="left:303px;top:593px;font-size:12px;color:#111;overflow:hidden;max-width:238px">V-drop (V)</div>
<div class="t b" style="left:376px;top:593px;font-size:12px;color:#111;overflow:hidden;max-width:165px">Layer</div>
<div class="t b" style="left:423px;top:593px;font-size:12px;color:#111;overflow:hidden;max-width:118px">Length (u)</div>
<div class="t b" style="left:497px;top:593px;font-size:12px;color:#111;overflow:hidden;max-width:44px">Width (Ohm)</div>
<div class="t b" style="left:45px;top:618px;font-size:12px;color:#111">1</div>
<div class="t" style="left:45px;top:649px;font-size:12px;color:#222">2</div>
<div class="t" style="left:63px;top:617px;font-size:12px;color:#eee">rh731</div>
<div class="t" style="left:216px;top:617px;font-size:12px;color:#eee">0</div>
<div class="t" style="left:297px;top:617px;font-size:12px;color:#eee">0.123305</div>
<div class="t" style="left:372px;top:617px;font-size:12px;color:#eee">mt2</div>
<div class="t" style="left:420px;top:617px;font-size:12px;color:#eee">3.7975</div>
<div class="t" style="left:495px;top:617px;font-size:12px;color:#eee">2</div>
<div class="t" style="left:63px;top:649px;font-size:12px;color:#222">rh732</div>
<div class="t" style="left:216px;top:649px;font-size:12px;color:#222">0</div>
<div class="t" style="left:297px;top:649px;font-size:12px;color:#222">0.114956</div>
<div class="t" style="left:372px;top:649px;font-size:12px;color:#222">mt2</div>
<div class="t" style="left:420px;top:649px;font-size:12px;color:#222">3.7975</div>
<div class="t" style="left:495px;top:649px;font-size:12px;color:#222">2</div>
<div class="a" style="left:541px;top:587px;width:17px;height:81px;background:#9a9a9a"></div>
<div class="a" style="left:541px;top:589px;width:17px;height:15px;background:#cbcbcb;border-top:2px solid #fcfcfc;border-bottom:2px solid #8a8a8a"></div>
<svg class="a" style="left:541px;top:589px" width="17" height="15"><path d="M4 10H13L8.5 4.5Z" fill="#fff"/></svg>
<div class="a" style="left:542px;top:605px;width:15px;height:20px;border:1px solid #888;border-radius:7px;background:linear-gradient(#f4f4f4,#c0c0c0)"></div>
<svg class="a" style="left:542px;top:605px" width="15" height="20"><path d="M4 8H11M4 10.5H11M4 13H11" stroke="#777" stroke-width="1"/></svg>
<div class="a" style="left:541px;top:652px;width:17px;height:15px;background:#cbcbcb;border:1px solid #aaa"></div>
<svg class="a" style="left:541px;top:652px" width="17" height="15"><path d="M4 5H13L8.5 11Z" fill="#fff"/></svg>
<div class="a" style="left:558px;top:587px;width:2px;height:81px;background:#fdfdfd"></div>
<div class="a" style="left:42px;top:668px;width:500px;height:16px;background:#9a9a9a"></div>
<div class="a" style="left:42px;top:668px;width:16px;height:16px;background:#cbcbcb;border:1px solid #aaa"></div>
<svg class="a" style="left:42px;top:668px" width="16" height="16"><path d="M11 4V12L5 8Z" fill="#fff"/></svg>
<div class="a" style="left:59px;top:668px;width:132px;height:16px;border:1px solid #888;border-radius:8px;background:linear-gradient(#f4f4f4,#c4c4c4)"></div>
<svg class="a" style="left:59px;top:668px" width="132" height="16"><path d="M62 5V11M65 5V11M68 5V11" stroke="#777" stroke-width="1"/></svg>
<div class="a" style="left:525px;top:668px;width:17px;height:16px;background:#cbcbcb;border:1px solid #aaa"></div>
<svg class="a" style="left:525px;top:668px" width="17" height="16"><path d="M6 4V12L12 8Z" fill="#fff"/></svg>
<div class="a" style="left:42px;top:684px;width:500px;height:1px;background:#3a3a3a"></div>
<div class="a" style="left:42px;top:711px;width:11px;height:2px;background:#9a9a9a"></div>
<svg class="a" style="left:40px;top:699px" width="16" height="14"><path d="M2.5 6.5L6 10.5L13 3" stroke="#dd1111" stroke-width="2.4" fill="none"/></svg>
<div class="t" style="left:58px;top:700px;font-size:12.7px;color:#222">Auto Zoom</div>
<div class="btn" style="left:134px;top:694px;width:97px;height:23px;line-height:22px">Compute LRP</div>
<div class="btn" style="left:240px;top:694px;width:91px;height:23px;line-height:22px">Print Report</div>
<div class="btn" style="left:340px;top:694px;width:110px;height:23px;line-height:22px">Clear Highlight</div>
<div class="a" style="left:460px;top:709px;width:11px;height:4px;background:#c0c0c0;border-top:1px solid #888"></div>
<div class="t" style="left:478px;top:700px;font-size:12.9px;color:#222">segmentwise</div>
<div class="btn" style="left:16px;top:748px;width:142px;height:24px;line-height:22px;border-radius:10px;background:linear-gradient(#fcfcfc 0,#fcfcfc 42%,#cbcbcb 42%)">Cancel</div>
<div class="btn" style="left:168px;top:748px;width:143px;height:24px;line-height:22px;border-radius:10px;background:linear-gradient(#fcfcfc 0,#fcfcfc 42%,#cbcbcb 42%)">Load</div>
<div class="btn" style="left:321px;top:748px;width:141px;height:24px;line-height:22px;border-radius:10px;background:linear-gradient(#fcfcfc 0,#fcfcfc 42%,#cbcbcb 42%)">Save</div>
<div class="btn" style="left:473px;top:748px;width:141px;height:24px;line-height:22px;border-radius:10px;background:linear-gradient(#fcfcfc 0,#fcfcfc 42%,#cbcbcb 42%)">Help</div>
</body></html>
